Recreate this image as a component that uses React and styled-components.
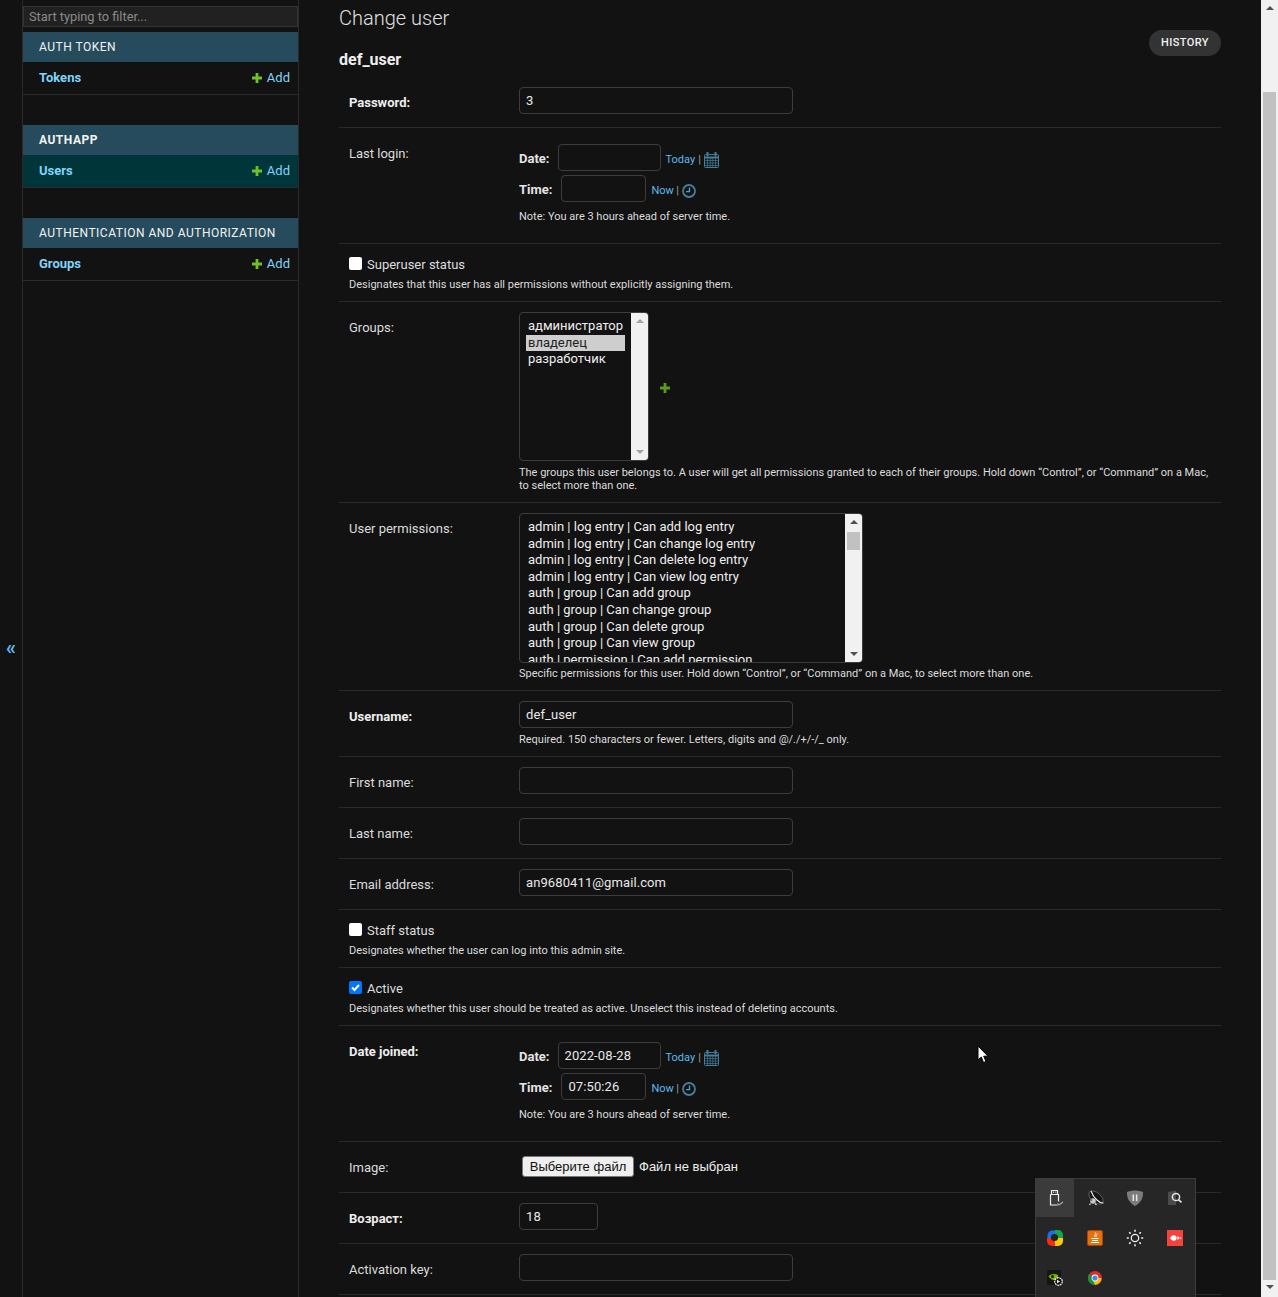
import React from "react";
import styled, { createGlobalStyle } from "styled-components";

const GlobalStyle = createGlobalStyle`
  html, body {
    margin: 0;
    height: 100%;
    overflow: hidden;
    background: #121212;
  }
  * { box-sizing: border-box; }
`;

const Page = styled.div`
  display: flex;
  height: 100vh;
  overflow: hidden;
  position: relative;
  background: #121212;
  color: #eeeeee;
  font-family: Roboto, "Liberation Sans", sans-serif;
  font-size: 13px;
`;

const Toggle = styled.div`
  width: 22px;
  flex: none;
  display: flex;
  align-items: center;
  justify-content: center;
  padding-bottom: 4px;
  color: #5fb9ec;
  font-size: 20px;
  font-weight: 700;
`;

const Sidebar = styled.aside`
  width: 277px;
  flex: none;
  border-left: 1px solid #2a2a2a;
  border-right: 1px solid #2a2a2a;
  padding-top: 6px;
`;

const Filter = styled.input`
  display: block;
  width: 100%;
  height: 21px;
  margin-bottom: 5px;
  padding: 0 5px;
  background: #212121;
  border: 1px solid #353535;
  color: #eee;
  font: 12.8px Roboto, sans-serif;
  outline: none;
  &::placeholder { color: #8a8a8a; opacity: 1; }
`;

const Module = styled.section`
  margin-bottom: 30px;
`;

const ModuleTitle = styled.div`
  height: 30px;
  line-height: 30px;
  padding-left: 16px;
  background: #264b5d;
  color: #f3f3f3;
  font-size: 12px;
  font-weight: ${(p) => (p.$current ? 700 : 400)};
  letter-spacing: 0.5px;
  text-transform: uppercase;
`;

const ModuleRow = styled.div`
  height: 33px;
  display: flex;
  align-items: center;
  justify-content: space-between;
  padding: 0 8px 1px 16px;
  border-bottom: 1px solid #2a2a2a;
  background: ${(p) => (p.$current ? "#00363a" : "transparent")};
`;

const ModelLink = styled.a`
  color: #81d4fa;
  font-weight: 700;
`;

const AddLink = styled.a`
  display: flex;
  align-items: center;
  gap: 5px;
  color: #81d4fa;
`;

const Main = styled.main`
  flex: 1;
  min-width: 0;
  padding: 0 40px;
`;

const Heading = styled.h1`
  margin: 0;
  padding-top: 6px;
  height: 40px;
  font-size: 20px;
  line-height: 25px;
  font-weight: 300;
  color: #e0e0e0;
`;

const TitleBar = styled.div`
  display: flex;
  justify-content: space-between;
  height: 37px;
`;

const ObjectName = styled.h2`
  margin: 0;
  padding-top: 10px;
  font-size: 16px;
  line-height: 20px;
  font-weight: 700;
`;

const History = styled.a`
  height: 26px;
  margin-top: -10px;
  padding: 0 12px;
  line-height: 25px;
  border-radius: 13px;
  background: #333333;
  color: #f0f0f0;
  font-size: 11px;
  font-weight: 500;
  letter-spacing: 0.42px;
`;

const Row = styled.div`
  height: ${(p) => p.$h}px;
  padding: 10px 10px 0;
  border-bottom: 1px solid #2a2a2a;
  display: ${(p) => (p.$stack ? "block" : "flex")};
`;

const Label = styled.label`
  width: 170px;
  flex: none;
  padding-top: 8px;
  line-height: 16px;
  color: ${(p) => (p.$req ? "#eeeeee" : "#dcdcdc")};
  font-weight: ${(p) => (p.$req ? 700 : 400)};
`;

const Field = styled.div`
  min-width: 0;
  flex: 1;
`;

const DateField = styled(Field)`
  padding-top: 6px;
`;

const TextInput = styled.div`
  width: ${(p) => p.$w ?? 274}px;
  height: 27px;
  padding: 0 6px;
  line-height: 25px;
  border: 1px solid #3d3d3d;
  border-radius: 4px;
  color: #e8e8e8;
  font-size: 13px;
  letter-spacing: 0.1px;
`;

const Help = styled.div`
  margin-top: ${(p) => p.$top ?? 5}px;
  font-size: 11px;
  line-height: 13px;
  color: #dcdcdc;
`;

const DateLine = styled.div`
  display: flex;
  align-items: center;
  height: 27px;
  margin-bottom: 4px;
`;

const DateLabel = styled.span`
  padding-top: 2px;
  font-weight: 700;
  color: #e4e4e4;
  margin-right: ${(p) => p.$gap}px;
`;

const ShortcutText = styled.span`
  margin-left: 5px;
  margin-top: 4px;
  font-size: 11px;
  color: #a0a0a0;
  display: flex;
  align-items: center;
  gap: ${(p) => p.$gap}px;
  a { color: #5fb9ec; }
`;

const CheckLine = styled.div`
  display: flex;
  align-items: center;
  gap: 5px;
  height: 16px;
  margin-top: 2px;
  color: #dddddd;
`;

const Check = styled.span`
  width: 13px;
  height: 13px;
  margin-top: -2px;
  border-radius: 2px;
  background: ${(p) => (p.$on ? "#0075ff" : "#ffffff")};
  display: flex;
  align-items: center;
  justify-content: center;
`;

const MultiRow = styled.div`
  display: flex;
  align-items: center;
  gap: 11px;
  svg { margin-top: 2px; }
`;

const ListBox = styled.div`
  width: ${(p) => p.$w}px;
  height: ${(p) => p.$h}px;
  border: 1px solid #3d3d3d;
  border-radius: 4px;
  display: flex;
  overflow: hidden;
`;

const ListItems = styled.div`
  flex: 1;
  min-width: 0;
  padding: 5px 6px 0;
  overflow: hidden;
`;

const ListItem = styled.div`
  height: 16.6px;
  line-height: 16.6px;
  padding: 0 2px;
  white-space: nowrap;
  color: ${(p) => (p.$on ? "#222222" : "#eeeeee")};
  background: ${(p) => (p.$on ? "#cecece" : "transparent")};
`;

const ScrollBar = styled.div`
  width: 17px;
  flex: none;
  background: #f1f1f1;
  position: relative;
  display: flex;
  flex-direction: column;
  align-items: center;
  justify-content: space-between;
  padding: 6px 0;
`;

const Thumb = styled.div`
  position: absolute;
  left: 2px;
  right: 2px;
  top: ${(p) => p.$top}px;
  height: ${(p) => p.$h}px;
  background: #c1c1c1;
`;

const Arrow = styled.span`
  width: 0;
  height: 0;
  border-left: 4px solid transparent;
  border-right: 4px solid transparent;
  ${(p) =>
    p.$down
      ? `border-top: 4px solid ${p.$dark ? "#505050" : "#a3a3a3"};`
      : `border-bottom: 4px solid ${p.$dark ? "#505050" : "#a3a3a3"};`}
`;

const FileLine = styled.div`
  display: flex;
  align-items: center;
  padding: 4px 0 0 3px;
  gap: 5px;
  font-family: "Liberation Sans", Arial, sans-serif;
  font-size: 13px;
  color: #eeeeee;
`;

const FileButton = styled.button`
  height: 21px;
  width: 112px;
  padding: 0;
  background: #efefef;
  border: 1px solid #767676;
  border-radius: 3px;
  color: #111;
  font: inherit;
`;

const PageScroll = styled(ScrollBar)`
  padding: 6px 0 8px;
`;

const Tray = styled.div`
  position: absolute;
  left: 1035px;
  top: 1178px;
  width: 161px;
  height: 130px;
  background: #262626;
  border: 1px solid #3c3c3c;
  display: grid;
  grid-template-columns: repeat(4, 38px);
  grid-auto-rows: 38px;
  gap: 2px;
`;

const TrayCell = styled.div`
  display: flex;
  align-items: center;
  justify-content: center;
  background: ${(p) => (p.$on ? "#3b3b3b" : "transparent")};
`;

const Cursor = styled.svg`
  position: absolute;
  left: 977px;
  top: 1045px;
`;

const Plus = ({ size = 10, color = "#70bf2b" }) => (
  <svg width={size} height={size} viewBox="0 0 10 10">
    <path d="M3.6 0h2.8v3.6H10v2.800H6.400V10H3.600V6.400H0V3.600h3.600z" fill={color} />
  </svg>
);

const Calendar = () => (
  <svg width="15" height="16" viewBox="0 0 15 16" fill="none" stroke="#447e9b">
    <rect x="0.500" y="2.500" width="14" height="13" rx="1" />
    <path d="M0.500 5.500h14" strokeWidth="2" />
    <path d="M3.500 0.500v3M11.500 0.500v3" strokeWidth="2" strokeLinecap="round" />
    <path d="M1 8.500h13M1 11h13M1 13.500h13M3.500 6v9M6.200 6v9M8.800 6v9M11.500 6v9" strokeWidth="0.800" opacity="0.85" />
  </svg>
);

const Clock = () => (
  <svg width="14" height="14" viewBox="0 0 14 14" fill="none" stroke="#447e9b">
    <circle cx="7" cy="7" r="6" strokeWidth="1.800" />
    <path d="M7.500 3.500V7.600H4" strokeWidth="1.400" stroke="#5f9ab8" />
  </svg>
);

const TrayIcons = [
  <svg key="usb" width="20" height="20" viewBox="0 0 20 20" fill="none" stroke="#eeeeee" strokeWidth="1.200">
    <path d="M6.500 2.500h6v4h-6z" />
    <path d="M5.500 6.500h8v7M5.500 6.500v10.500h7" />
    <path d="M8 4.200h1M10.300 4.200h1" />
    <path d="M12.500 15.500l1.500 1.500 4-3" stroke="#a8a8a8" />
  </svg>,
  <svg key="dish" width="20" height="20" viewBox="0 0 20 20" fill="none">
    <ellipse cx="11" cy="9.500" rx="8.500" ry="4.800" transform="rotate(40 11 9.500)" fill="#161616" stroke="#6a6a6a" strokeWidth="0.800" />
    <path d="M17.500 15.500C14 16 7.500 11 5 3.500" stroke="#f0f0f0" strokeWidth="1.100" transform="translate(1 -.5)" />
    <circle cx="8" cy="13" r="2.800" fill="#c8c8c8" />
    <circle cx="6.200" cy="12" r="1" fill="#666" />
    <path d="M5.500 15.500l-1 1.500M10 15.500l1.500 1.500" stroke="#dddddd" strokeWidth="1.200" />
  </svg>,
  <svg key="shield" width="18" height="18" viewBox="0 0 18 18">
    <path d="M1 3C4 2 6.500 1.500 9 1.500S14 2 17 3c.3 6-2 10.500-8 14C3 13.500.7 9 1 3z" fill="#7c7c7c" />
    <path d="M6.600 5.500h1.500v6.500H6.600zM9.900 5.500h1.500v6.500H9.900z" fill="#e8e8e8" />
  </svg>,
  <svg key="search" width="18" height="18" viewBox="0 0 18 18" fill="none">
    <path d="M2 3l8-1.500V16H2z" fill="#4c4c4c" />
    <circle cx="10" cy="8" r="3.600" stroke="#e4e4e4" strokeWidth="1.500" />
    <path d="M12.600 10.800l2.900 2.500" stroke="#e4e4e4" strokeWidth="1.700" />
  </svg>,
  <svg key="ring" width="16" height="16" viewBox="0 0 16 16">
    <rect x="0.500" y="0.500" width="15" height="15" rx="5" fill="#1a6ef0" />
    <path d="M8 0h3a5 5 0 0 1 5 5v3H8z" fill="#15a84a" />
    <path d="M0 8v3a5 5 0 0 0 5 5h3V8z" fill="#f2300f" />
    <path d="M8 16h3a5 5 0 0 0 5-5V8H8z" fill="#ffc90a" />
    <circle cx="7.500" cy="7.500" r="3.600" fill="#222222" />
  </svg>,
  <svg key="java" width="16" height="16" viewBox="0 0 16 16" fill="none">
    <rect x="0.500" y="0.500" width="15" height="15" rx="1.500" fill="#e4700e" stroke="#a3470a" />
    <path d="M8.500 2.500c1 1.500-1.500 2.500-1 4M10.500 4c-1.500 1-1.800 1.800-1.300 3" stroke="#fff" />
    <path d="M4.500 8.500h7M5 10.500h6M4 12.500h8" stroke="#fff" />
  </svg>,
  <svg key="sun" width="18" height="18" viewBox="0 0 18 18" fill="none" stroke="#eeeeee">
    <circle cx="9" cy="9" r="3.700" strokeWidth="1.300" />
    <path d="M9 .800v2M9 15.200v2M.800 9h2M15.200 9h2M3.200 3.200l1.400 1.400M13.400 13.400l1.400 1.400M3.200 14.800l1.400-1.400M13.400 4.600l1.400-1.400" strokeWidth="1.600" />
  </svg>,
  <svg key="red" width="16" height="16" viewBox="0 0 16 16">
    <rect width="16" height="16" fill="#f4433c" />
    <path d="M3 8c1-1.500 2-2.800 3.800-2.800S9.500 6.500 9.800 8c-.3 1.500-1.200 2.800-3 2.800S4 9.500 3 8z" fill="#ffffff" />
    <path d="M10.500 5.800L12.800 8l-2.300 2.200z" fill="#ffffff" />
    <path d="M13.300 6.700L14.600 8l-1.300 1.300z" fill="#ffd0cc" />
  </svg>,
  <svg key="nvidia" width="16" height="16" viewBox="0 0 16 16" fill="none">
    <rect width="14" height="15" fill="#151515" />
    <path d="M1.500 6.500C4 3.500 8 3.500 11 5v4.500C8 11 4 10 1.500 6.500z" fill="#76b900" />
    <circle cx="5.500" cy="6.500" r="1.500" fill="#151515" />
    <circle cx="11.500" cy="11.500" r="3.800" fill="#151515" stroke="#f0f0f0" strokeWidth="1.200" strokeDasharray="2 .6" />
    <path d="M10 9.800l3 1.700-3 1.700z" fill="#f0f0f0" />
  </svg>,
  <svg key="chrome" width="14" height="14" viewBox="0 0 14 14">
    <circle cx="7" cy="7" r="7" fill="#d93025" />
    <path d="M7 7L.9 3.500A7 7 0 0 0 7 14l3-7z" fill="#1e8e3e" />
    <path d="M7 7h6.500A7 7 0 0 1 7 14L4 7z" fill="#fbbc04" />
    <path d="M7 7L3.500 13A7 7 0 0 1 .9 3.500z" fill="#1e8e3e" />
    <circle cx="7" cy="7" r="3.400" fill="#ffffff" />
    <circle cx="7" cy="7" r="2.600" fill="#4285f4" />
  </svg>,
];

const groups = ["администратор", "владелец", "разработчик"];
const perms = [
  "admin | log entry | Can add log entry",
  "admin | log entry | Can change log entry",
  "admin | log entry | Can delete log entry",
  "admin | log entry | Can view log entry",
  "auth | group | Can add group",
  "auth | group | Can change group",
  "auth | group | Can delete group",
  "auth | group | Can view group",
  "auth | permission | Can add permission",
];

const modules = [
  { title: "Auth Token", model: "Tokens" },
  { title: "Authapp", model: "Users", current: true },
  { title: "Authentication and Authorization", model: "Groups" },
];

const DateTime = ({ date = "", time = "" }) => (
  <DateField>
    <DateLine>
      <DateLabel $gap={8}>Date:</DateLabel>
      <TextInput $w={103}>{date}</TextInput>
      <ShortcutText $gap={3}><a>Today</a>| <Calendar /></ShortcutText>
    </DateLine>
    <DateLine>
      <DateLabel $gap={9}>Time:</DateLabel>
      <TextInput $w={85}>{time}</TextInput>
      <ShortcutText $gap={2.5}><a>Now</a>| <Clock /></ShortcutText>
    </DateLine>
    <Help $top={8}>Note: You are 3 hours ahead of server time.</Help>
  </DateField>
);

const TextRow = ({ label, value, req, w }) => (
  <Row $h={51}>
    <Label $req={req}>{label}</Label>
    <Field><TextInput $w={w}>{value}</TextInput></Field>
  </Row>
);

const CheckRow = ({ label, help, on }) => (
  <Row $h={58} $stack>
    <CheckLine>
      <Check $on={on}>
        {on && (
          <svg width="11" height="11" viewBox="0 0 11 11" fill="none">
            <path d="M2 5.500l2.500 2.500L9 3" stroke="#fff" strokeWidth="2" />
          </svg>
        )}
      </Check>
      {label}
    </CheckLine>
    <Help $top={6}>{help}</Help>
  </Row>
);

export default function App() {
  return (
    <Page>
      <GlobalStyle />
      <Toggle>«</Toggle>
      <Sidebar>
        <Filter placeholder="Start typing to filter..." />
        {modules.map((m) => (
          <Module key={m.model}>
            <ModuleTitle $current={m.current}>{m.title}</ModuleTitle>
            <ModuleRow $current={m.current}>
              <ModelLink>{m.model}</ModelLink>
              <AddLink><Plus />Add</AddLink>
            </ModuleRow>
          </Module>
        ))}
      </Sidebar>
      <Main>
        <Heading>Change user</Heading>
        <TitleBar>
          <ObjectName>def_user</ObjectName>
          <History>HISTORY</History>
        </TitleBar>
        <TextRow req label="Password:" value="3" />
        <Row $h={116}>
          <Label>Last login:</Label>
          <DateTime />
        </Row>
        <CheckRow label="Superuser status" help="Designates that this user has all permissions without explicitly assigning them." />
        <Row $h={201}>
          <Label>Groups:</Label>
          <Field>
            <MultiRow>
              <ListBox $w={130} $h={149}>
                <ListItems>
                  {groups.map((g, i) => (
                    <ListItem key={g} $on={i === 1}>{g}</ListItem>
                  ))}
                </ListItems>
                <ScrollBar>
                  <Arrow />
                  <Arrow $down />
                </ScrollBar>
              </ListBox>
              <Plus size={10} color="#5a9a22" />
            </MultiRow>
            <Help>The groups this user belongs to. A user will get all permissions granted to each of their groups. Hold down “Control”, or “Command” on a Mac, to select more than one.</Help>
          </Field>
        </Row>
        <Row $h={188}>
          <Label>User permissions:</Label>
          <Field>
            <ListBox $w={344} $h={150}>
              <ListItems>
                {perms.map((p) => (
                  <ListItem key={p}>{p}</ListItem>
                ))}
              </ListItems>
              <ScrollBar>
                <Arrow $dark />
                <Thumb $top={18} $h={18} />
                <Arrow $down $dark />
              </ScrollBar>
            </ListBox>
            <Help $top={4}>Specific permissions for this user. Hold down “Control”, or “Command” on a Mac, to select more than one.</Help>
          </Field>
        </Row>
        <Row $h={66}>
          <Label $req>Username:</Label>
          <Field>
            <TextInput>def_user</TextInput>
            <Help>Required. 150 characters or fewer. Letters, digits and @/./+/-/_ only.</Help>
          </Field>
        </Row>
        <TextRow label="First name:" />
        <TextRow label="Last name:" />
        <TextRow label="Email address:" value="an9680411@gmail.com" />
        <CheckRow label="Staff status" help="Designates whether the user can log into this admin site." />
        <CheckRow on label="Active" help="Designates whether this user should be treated as active. Unselect this instead of deleting accounts." />
        <Row $h={116}>
          <Label $req>Date joined:</Label>
          <DateTime date="2022-08-28" time="07:50:26" />
        </Row>
        <Row $h={51}>
          <Label>Image:</Label>
          <Field>
            <FileLine>
              <FileButton>Выберите файл</FileButton>
              Файл не выбран
            </FileLine>
          </Field>
        </Row>
        <TextRow req label="Возраст:" value="18" w={79} />
        <TextRow label="Activation key:" />
      </Main>
      <PageScroll>
        <Arrow $dark />
        <Thumb $top={92} $h={1188} />
        <Arrow $down $dark />
      </PageScroll>
      <Tray>
        {TrayIcons.map((icon, i) => (
          <TrayCell key={icon.key} $on={i === 0}>{icon}</TrayCell>
        ))}
      </Tray>
      <Cursor width="12" height="19" viewBox="0 0 12 19">
        <path d="M1 1v14l3.300-3 2.200 5.500 2.500-1-2.300-5.300H11z" fill="#fff" stroke="#000" />
      </Cursor>
    </Page>
  );
}
